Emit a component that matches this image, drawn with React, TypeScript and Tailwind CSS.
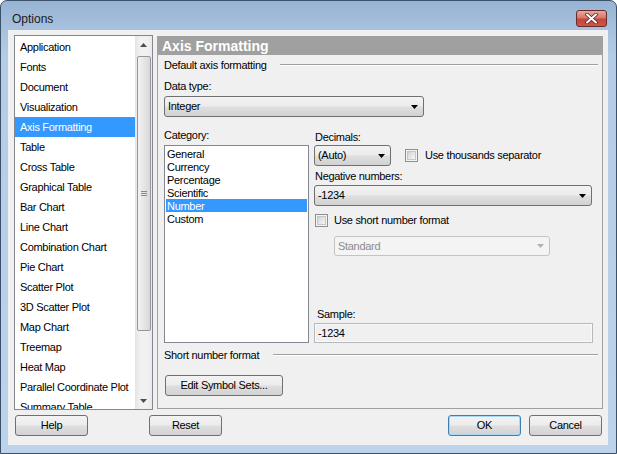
import React from 'react';

const sideItems = [
  'Application', 'Fonts', 'Document', 'Visualization', 'Axis Formatting', 'Table',
  'Cross Table', 'Graphical Table', 'Bar Chart', 'Line Chart', 'Combination Chart',
  'Pie Chart', 'Scatter Plot', '3D Scatter Plot', 'Map Chart', 'Treemap', 'Heat Map',
  'Parallel Coordinate Plot', 'Summary Table',
];
const categories = ['General', 'Currency', 'Percentage', 'Scientific', 'Number', 'Custom'];

const Arrow = ({ color = '#000', up = false }: { color?: string; up?: boolean }) => (
  <svg width="7" height="4" viewBox="0 0 7 4">
    <path d={up ? 'M0 4h7L3.5 0z' : 'M0 0h7L3.5 4z'} fill={color} />
  </svg>
);

const Combo = ({ text, className, disabled }: { text: string; className: string; disabled?: boolean }) => (
  <div
    className={`flex items-center justify-between rounded-[3px] border pl-[3px] pr-[5px] ${
      disabled
        ? 'border-[#c2c4c6] bg-[#f4f4f4] text-[#8a8a8a]'
        : 'border-[#707070] bg-[linear-gradient(#f3f3f3,#ececec_45%,#dedede_55%,#d2d2d2)] text-black'
    } ${className}`}
  >
    <span>{text}</span>
    <Arrow color={disabled ? '#b0b0b0' : '#000'} />
  </div>
);

const Check = () => (
  <div className="w-[13px] h-[13px] shrink-0 border border-[#8e8f8f] bg-[#f4f4f4] p-[1px]">
    <div className="w-full h-full border border-[#c3c6ca] bg-[linear-gradient(135deg,#d0d3d7,#f7f7f7)]" />
  </div>
);

const Btn = ({ label, className, primary }: { label: string; className: string; primary?: boolean }) => (
  <div
    className={`h-[21px] flex items-center justify-center rounded-[3px] border bg-[linear-gradient(#f3f3f3,#ececec_45%,#dedede_55%,#d2d2d2)] ${
      primary ? 'border-[#3c7fb1] shadow-[inset_0_0_0_1px_#a9d8f5]' : 'border-[#707070]'
    } ${className}`}
  >
    {label}
  </div>
);

const Label = ({ text, className = '' }: { text: string; className?: string }) => (
  <div className={`h-[14px] leading-[14px] ${className}`}>{text}</div>
);

export default function App() {
  return (
    <div className="w-[617px] h-[454px] font-['Liberation_Sans',Arial,sans-serif] text-[11px] tracking-[-0.3px] text-black">
      <div className="w-[617px] h-[454px] flex flex-col rounded-t-[7px] border border-[#3b5069] bg-[linear-gradient(#98b4d4,#b4cce6_12%,#bcd3ea)]">
        {/* Title bar */}
        <div className="h-[29px] flex items-start justify-between pl-[11px] pr-[9px]">
          <span className="mt-[10px] leading-[16px] text-[12px] tracking-normal text-[#1b1b1b]">Options</span>
          <div className="mt-[9px] w-[31px] h-[17px] rounded-[3px] border border-[#6e2a2a] bg-[linear-gradient(#e6a99f,#d6786b_45%,#c4463a_55%,#c75a45)] flex items-center justify-center">
            <svg width="13" height="11" viewBox="0 0 13 11">
              <path d="M2 1.5l9 8M11 1.5l-9 8" stroke="#5a1e1e" strokeWidth="3.6" strokeLinecap="round" />
              <path d="M2 1.5l9 8M11 1.5l-9 8" stroke="#fff" strokeWidth="2" strokeLinecap="round" />
            </svg>
          </div>
        </div>

        {/* Client area */}
        <div className="ml-[7px] mr-[8px] h-[415px] bg-[#f0f0f0] flex flex-col pt-[5px] pl-[6px] pr-[5px]">
          <div className="flex gap-[4px] h-[375px]">
            {/* Left list */}
            <div className="w-[139px] h-[375px] border border-[#828790] bg-white flex">
              <div className="flex-1 pt-[1px] overflow-hidden">
                {sideItems.map((item) => (
                  <div
                    key={item}
                    className={`h-[20px] leading-[20px] pl-[5px] whitespace-nowrap ${
                      item === 'Axis Formatting' ? 'bg-[#3399ff] text-white' : ''
                    }`}
                  >
                    {item}
                  </div>
                ))}
              </div>
              <div className="w-[17px] flex flex-col bg-[linear-gradient(90deg,#e4e4e4,#f1f1f1_30%,#f1f1f1_70%,#e9e9e9)]">
                <div className="h-[17px] flex items-center justify-center">
                  <Arrow up color="#4d4d4d" />
                </div>
                <div className="mt-[3px] ml-[2px] mr-[1px] h-[275px] rounded-[2px] border border-[#979797] bg-[linear-gradient(90deg,#f2f2f2,#e6e6e6_50%,#d7d7d7)] flex items-center justify-center">
                  <div className="flex flex-col gap-[1px]">
                    <div className="w-[6px] h-[1px] bg-[#8a8a8a]" />
                    <div className="w-[6px] h-[1px] bg-[#8a8a8a]" />
                    <div className="w-[6px] h-[1px] bg-[#8a8a8a]" />
                  </div>
                </div>
                <div className="flex-1" />
                <div className="h-[17px] flex items-center justify-center">
                  <Arrow color="#4d4d4d" />
                </div>
              </div>
            </div>

            {/* Right panel */}
            <div className="mt-[1px] w-[446px] h-[373px] border border-[#a0a0a0] flex flex-col">
              <div className="h-[18px] bg-[#a0a0a0] pl-[4px] text-white font-bold text-[14px] tracking-normal leading-[18px]">
                Axis Formatting
              </div>
              <div className="flex-1 flex flex-col pl-[6px] pr-[4px]">
                <div className="mt-[3px] h-[14px] flex items-center">
                  <span className="leading-[14px]">Default axis formatting</span>
                  <div className="flex-1 ml-[13px] h-[2px] border-t border-[#a0a0a0] border-b border-b-white" />
                </div>
                <Label text="Data type:" className="mt-[7px]" />
                <Combo text="Integer" className="mt-[3px] w-[260px] h-[21px]" />

                <div className="mt-[11px] flex gap-[5px]">
                  {/* Category */}
                  <div className="w-[145px] flex flex-col">
                    <Label text="Category:" />
                    <div className="mt-[3px] h-[198px] border border-[#828790] bg-white p-[1px]">
                      {categories.map((c) => (
                        <div
                          key={c}
                          className={`h-[13px] leading-[14px] pl-[1px] ${c === 'Number' ? 'bg-[#3399ff] text-white' : ''}`}
                        >
                          {c}
                        </div>
                      ))}
                    </div>
                  </div>

                  {/* Options column */}
                  <div className="flex-1 flex flex-col">
                    <Label text="Decimals:" className="mt-[2px] pl-[1px]" />
                    <div className="mt-[1px] h-[21px] flex items-center">
                      <Combo text="(Auto)" className="w-[77px] h-[21px]" />
                      <div className="ml-[14px]"><Check /></div>
                      <span className="ml-[7px]">Use thousands separator</span>
                    </div>
                    <Label text="Negative numbers:" className="mt-[3px] pl-[1px]" />
                    <Combo text="-1234" className="mt-[2px] w-[278px] h-[21px]" />
                    <div className="mt-[8px] h-[13px] flex items-center">
                      <div className="ml-[1px]"><Check /></div>
                      <span className="ml-[6px]">Use short number format</span>
                    </div>
                    <Combo text="Standard" disabled className="mt-[9px] ml-[20px] w-[216px] h-[20px]" />
                    <Label text="Sample:" className="mt-auto pl-[3px]" />
                    <div className="mt-[2px] w-[279px] h-[20px] border border-[#b5b8bd] bg-[#f0f0f0] shadow-[inset_0_0_0_1px_#fafafa] pl-[3px] leading-[18px]">
                      -1234
                    </div>
                  </div>
                </div>

                <div className="mt-[5px] h-[14px] flex items-center">
                  <span className="leading-[14px]">Short number format</span>
                  <div className="flex-1 ml-[14px] h-[2px] border-t border-[#a0a0a0] border-b border-b-white" />
                </div>
                <Btn label="Edit Symbol Sets..." className="mt-[13px] ml-[1px] w-[118px]" />
              </div>
            </div>
          </div>

          {/* Bottom buttons */}
          <div className="mt-[5px] flex">
            <Btn label="Help" className="ml-[1px] w-[73px]" />
            <Btn label="Reset" className="ml-[61px] w-[73px]" />
            <div className="flex-1" />
            <Btn label="OK" primary className="w-[73px]" />
            <Btn label="Cancel" className="ml-[8px] mr-[1px] w-[73px]" />
          </div>
        </div>
      </div>
    </div>
  );
}
